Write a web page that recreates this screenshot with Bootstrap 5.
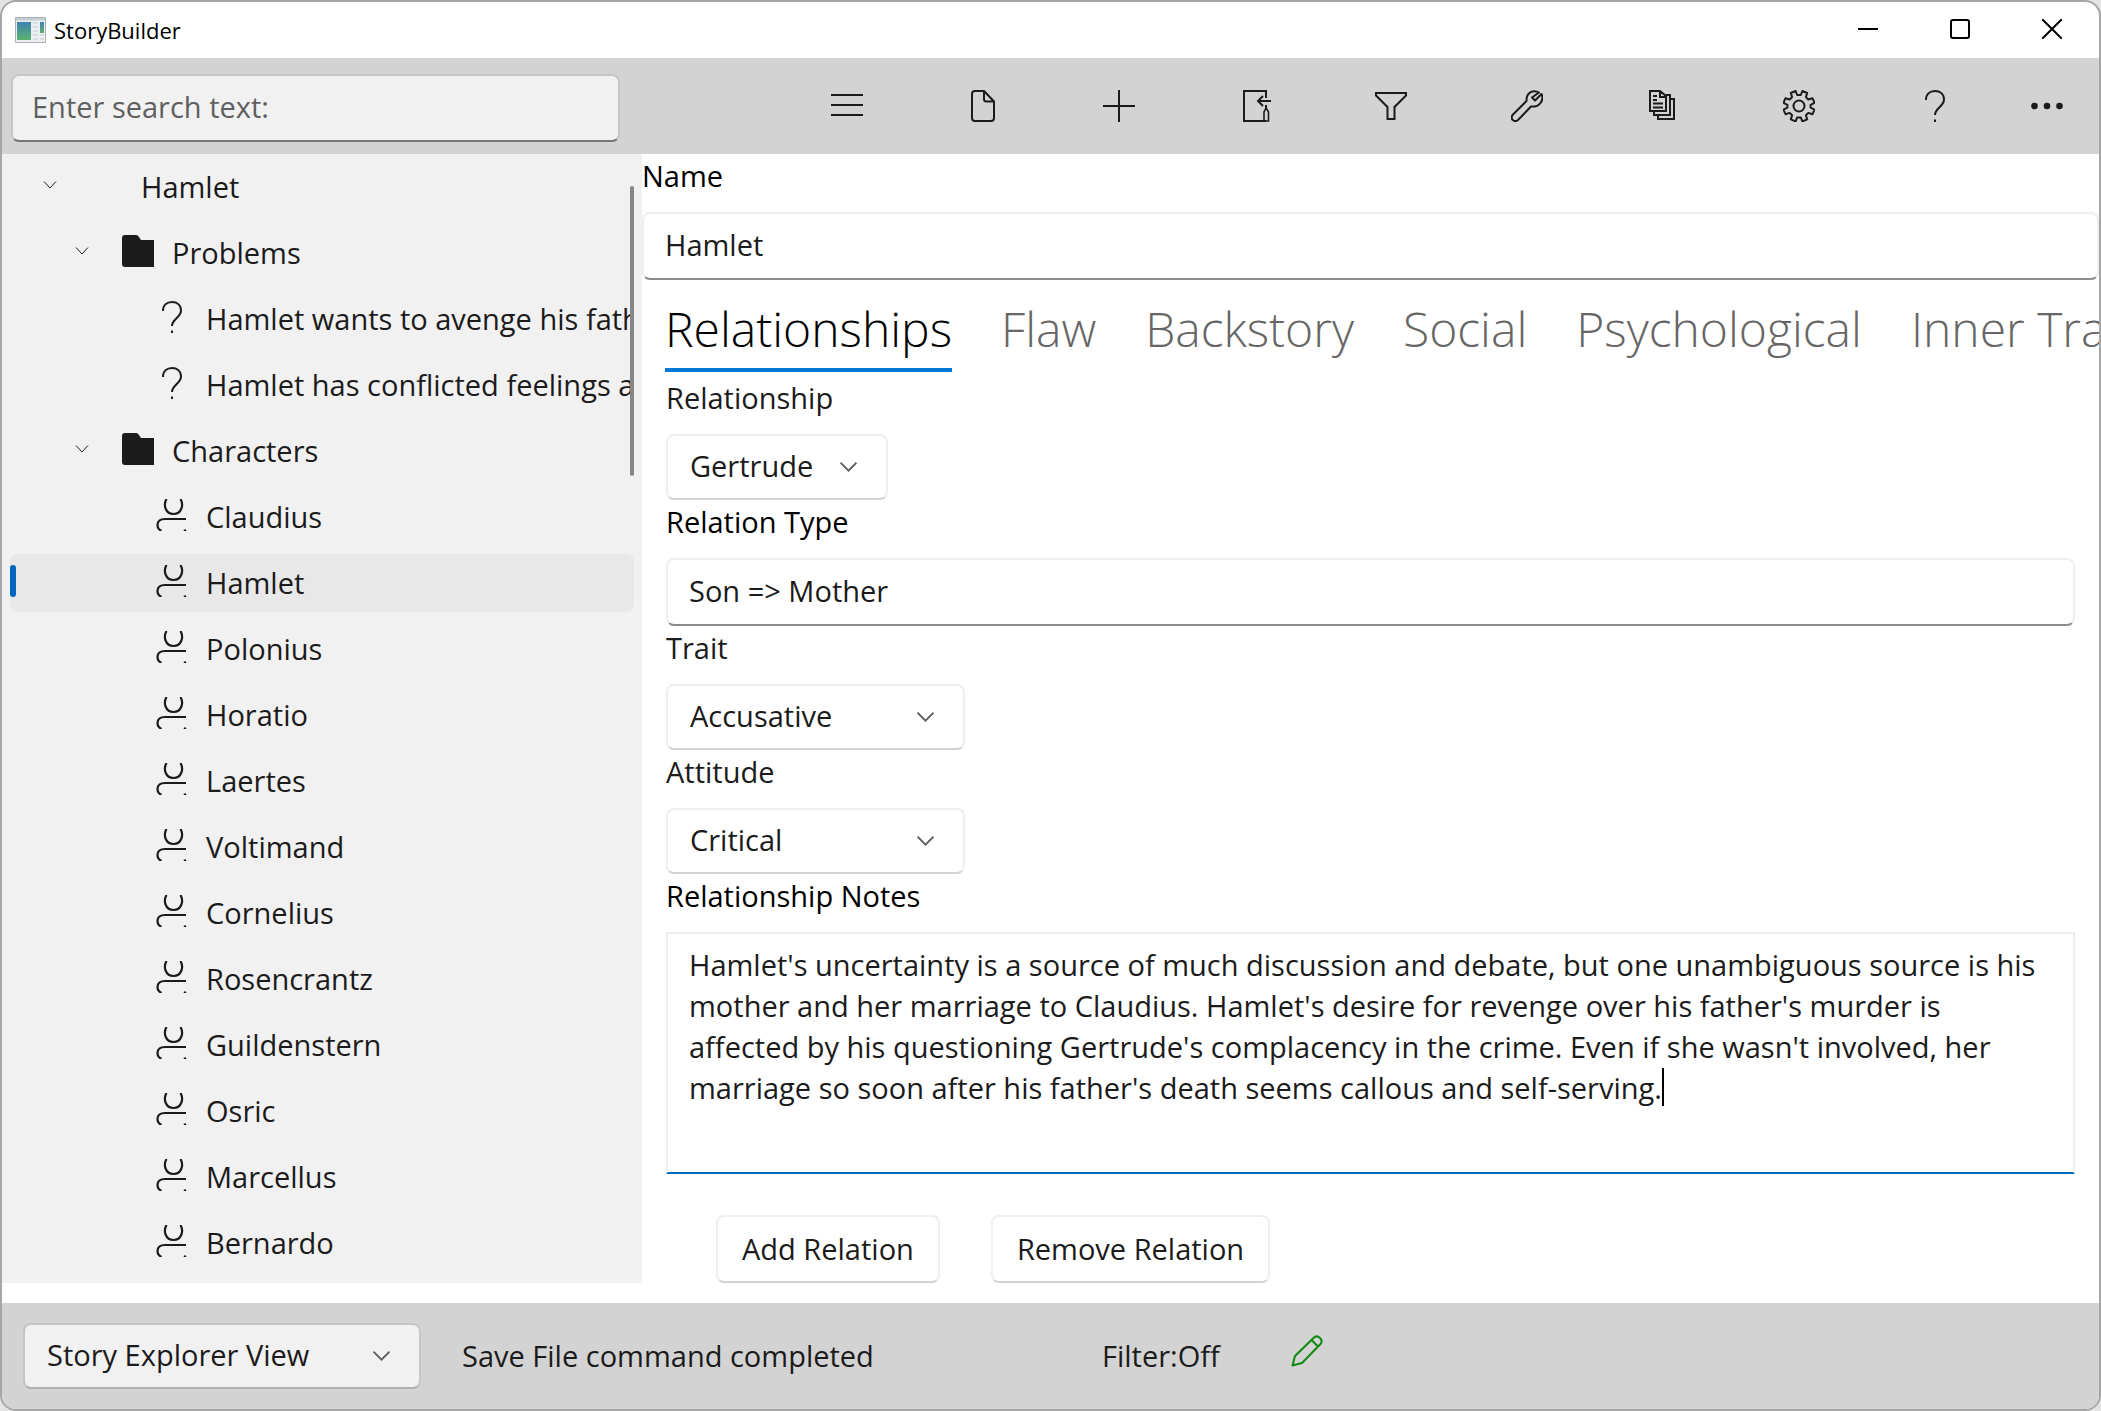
<!DOCTYPE html>
<html lang="en">
<head>
<meta charset="utf-8">
<meta name="viewport" content="width=device-width, initial-scale=1">
<title>StoryBuilder</title>
<link href="https://cdn.jsdelivr.net/npm/bootstrap@5.3.0/dist/css/bootstrap.min.css" rel="stylesheet">
<style>
  :root { --ink: #1b1b1b; --bar: #d3d3d3; --pane: #f1f1f1; --chev: url("data:image/svg+xml,%3Csvg xmlns='http://www.w3.org/2000/svg' viewBox='0 0 16 16'%3E%3Cpath d='M0.500 4.500 8 12l7.500-7.500' fill='none' stroke='%23606060' stroke-width='1.800'/%3E%3C/svg%3E"); }
  body { font-family: "Open Sans", "Noto Sans", sans-serif; font-size: 29px; line-height: 40px; color: var(--ink); background: #e4e4e4; }
  svg { display: block; fill: none; stroke: currentColor; stroke-width: 2; }
  .app-window { min-height: 100vh; border: 2px solid #a6a6a6; border-radius: 16px; background: #fff; overflow: hidden; }
  .title-strip { height: 56px; color: #000; font-size: 22px; padding-left: 13px; padding-right: 1px; }
  .caption-btn { width: 92px; height: 54px; margin-bottom: 2px; }
  .plain-btn { border: 0; padding: 0; background: none; color: inherit; display: flex; align-items: center; justify-content: center; }
  .tool-strip { height: 96px; background: var(--bar); padding: 0 8px 0 9px; }
  .tool-btn { width: 136px; height: 96px; }
  .more-btn { width: 88px; }
  .form-control, .form-select, .btn { font-size: 29px; line-height: 40px; color: var(--ink); }
  .form-control { height: 68px; padding: 10px 21px 14px; border: 2px solid #efefef; border-bottom-color: #8b8b8b; border-radius: 8px; }
  .form-select { height: 66px; width: 299px; padding: 10px 60px 12px 22px; border: 2px solid #efefef; border-bottom-color: #d3d3d3; border-radius: 8px; background-color: #fff; background-image: var(--chev); background-size: 17px 17px; background-position: right 29px top 22px; }
  .form-select.narrow { width: 222px; padding-right: 40px; }
  .form-select.view-pick { width: 398px; background-color: #f1f1f1; border-color: #c6c6c6; border-bottom-color: #b0b0b0; }
  .search-field { width: 609px; background: #f1f1f1; border-color: #c6c6c6; border-bottom-color: #767676; padding-left: 19px; margin-top: 4px; }
  .search-field::placeholder { color: #5f5f5f; }
  .explorer { flex: 0 0 640px; min-width: 0; background: var(--pane); padding: 0 8px; position: relative; }
  .tree-clip { overflow: hidden; }
  .tree-clip li { padding: 4px 0; }
  .tree-item { height: 58px; border-radius: 8px; white-space: nowrap; color: var(--ink); text-decoration: none; display: flex; align-items: center; }
  .tree-item.selected { background: #e8e8e8; position: relative; }
  .tree-item.selected::before { content: ""; position: absolute; left: 0; top: 11px; width: 6px; height: 32px; border-radius: 3px; background: #0067c0; }
  .lvl-0 { padding-left: 33px; } .lvl-0 .chev { margin-right: 84px; }
  .lvl-1 { padding-left: 65px; } .lvl-1 .chev { margin-right: 33px; }
  .lvl-2 { padding-left: 146px; }
  .chev { stroke-width: 1; margin-bottom: 4px; }
  .tree-icon { margin-right: 18px; margin-bottom: 4px; flex: none; }
  .scroll-thumb { position: absolute; right: 8px; top: 32px; width: 4px; height: 290px; border-radius: 2px; background: #868686; }
  .form-label { display: block; line-height: 44px; margin: 0 0 14px; }
  .dark-label { color: #000; }
  .tab-strip { height: 96px; gap: 49px; padding-left: 23px; overflow: hidden; }
  .tab-strip .nav-link { padding: 0; font-size: 48px; font-weight: 300; line-height: 98px; height: 92px; color: #666; border-bottom: 4px solid transparent; white-space: nowrap; }
  .tab-strip .nav-link.active { color: #000; border-bottom-color: #0078d7; }
  .detail { padding: 0 24px 0 24px; }
  .notes-field { height: 242px; line-height: 41px; border-radius: 0; border-bottom-color: #0067c0; resize: none; overflow: hidden; }
  .text-caret { position: absolute; left: 996px; top: 136px; width: 2px; height: 38px; background: #000; }
  .detail-actions { padding-left: 50px; gap: 51px; }
  .action-btn { height: 68px; padding: 0 24px; border: 2px solid #efefef; border-bottom-color: #d3d3d3; border-radius: 8px; background: #fff; }
  .status-strip { height: 106px; background: var(--bar); padding-left: 21px; margin-top: 20px; }
  .status-msg { width: 640px; margin-left: 41px; }
  .pencil { color: #0f8a0f; margin: 0 0 10px 71px; }
</style>
<script src="https://cdn.jsdelivr.net/npm/bootstrap@5.3.0/dist/js/bootstrap.bundle.min.js"></script>
</head>
<body>
<svg width="0" height="0" class="position-absolute" aria-hidden="true">
  <symbol id="i-chev" viewBox="0 0 14 10"><path d="M1 1.500 7 8l6-6.500"/></symbol>
  <symbol id="i-folder" viewBox="0 0 32 32"><path d="M3 0h11q2 0 3 2l2 3h13v27H3q-3 0-3-3V3q0-3 3-3z" fill="#1b1b1b" stroke="none"/></symbol>
  <symbol id="i-help" viewBox="0 0 32 32"><path d="M7 10C7 4 11 1 16 1s9 3 9 8.500c0 7-9 8.500-9 15.500"/><path d="M16 29.500v2.500"/></symbol>
  <symbol id="i-person" viewBox="0 0 32 32"><path d="M10.500 0C7 6 9.500 15 17.500 15S28 6 24.500 0" stroke-width="2.200"/><path d="M30 20H9q-7.500 0-7.500 6 0 4 4 6M28 32l2-1" stroke-width="2.200"/></symbol>
</svg>
<div class="app-window d-flex flex-column">
  <header class="title-strip d-flex align-items-center">
    <svg width="31" height="26" viewBox="0 0 31 26" stroke="none"><defs><linearGradient id="g" x2="0" y2="1"><stop stop-color="#3f81b4"/><stop offset="1" stop-color="#5bb36d"/></linearGradient></defs><path d="M.5.500h30v25H.5z" fill="#eceef0" stroke="#a9b2ba" stroke-width="1"/><path d="M1 1h29v2.500H1z" fill="#c3cdd6" stroke="none"/><path d="M2 5h14v18H2z" fill="url(#g)" stroke="none"/><path d="M25 5h4v11h-4z" fill="url(#g)" stroke="none"/><path d="M18 6h5M18 10h5M18 14h5M18 18h5M18 22h5M25 18h4M25 22h4" stroke="#c9cdd1" stroke-width="1"/></svg>
    <span class="ms-2 me-auto">StoryBuilder</span>
    <button class="plain-btn caption-btn" aria-label="Minimize"><svg width="20" height="20"><path d="M0 10h20"/></svg></button>
    <button class="plain-btn caption-btn" aria-label="Maximize"><svg width="20" height="20"><rect x="1" y="1" width="18" height="18" rx="2"/></svg></button>
    <button class="plain-btn caption-btn" aria-label="Close"><svg width="20" height="20"><path d="M0 0l20 20M20 0 0 20"/></svg></button>
  </header>

  <div class="tool-strip d-flex align-items-center">
    <input class="form-control search-field" type="search" placeholder="Enter search text:" aria-label="Search text">
    <nav class="d-flex ms-auto" aria-label="Commands">
      <button class="plain-btn tool-btn" aria-label="Menu"><svg width="32" height="32"><path d="M0 5h32M0 15h32M0 25h32"/></svg></button>
      <button class="plain-btn tool-btn" aria-label="File"><svg width="32" height="32"><path d="M7 1h10l10 10.500V28q0 3-3 3H8q-3 0-3-3V4q0-3 3-3M17 1v8q0 2.500 2.500 2.500H27"/></svg></button>
      <button class="plain-btn tool-btn" aria-label="Add"><svg width="32" height="32"><path d="M16 0v32M0 16h32"/></svg></button>
      <button class="plain-btn tool-btn" aria-label="Move"><svg width="32" height="32"><path d="M27 8V1H5v30h22M33 11H19M24 6l-5 5 5 5M27 15v4"/><path d="M27 18l-2 4v9h4.500v-9z" stroke-width="1.600"/></svg></button>
      <button class="plain-btn tool-btn" aria-label="Filter"><svg width="32" height="32"><path d="M1 3h30v2.500L19.500 17v12h-7V17L1 5.500z"/></svg></button>
      <button class="plain-btn tool-btn" aria-label="Tools"><svg width="32" height="32"><path d="M28 2.500C22-1 15 3 15.500 11L1.500 25c-2.500 4 2 8 5.500 5L20 16.500c8 1 13.500-6 10.500-12.500L24 10.500l-3-3z" stroke-linejoin="round"/></svg></button>
      <button class="plain-btn tool-btn" aria-label="Reports"><svg width="32" height="32"><path d="M3 1h10l6 5v15H3zM13 1v6h6M19 5h4v20H7v-4M23 9h4v20H11v-4M6 6h4M6 10h4M6 13.500h10M6 17.500h10"/></svg></button>
      <button class="plain-btn tool-btn" aria-label="Settings"><svg width="32" height="32" viewBox="0 0 32 32"><circle cx="16" cy="16" r="5.500"/><path stroke-linejoin="round" d="M12.600 1 14.200 5h3.600l1.600-4 4.800 2-1.300 4.100 2.400 2.400 4.200-1.300 2 4.600-3.900 2v2.800l3.900 2-2 4.600-4.200-1.300-2.400 2.400 1.300 4.100-4.800 2-1.600-4h-3.600l-1.600 4-4.800-2 1.300-4.100-2.400-2.400-4.200 1.300-2-4.600 3.900-2v-2.800l-3.900-2 2-4.600 4.200 1.300 2.400-2.400L7.800 3z"/></svg></button>
      <button class="plain-btn tool-btn" aria-label="Help"><svg width="32" height="32"><use href="#i-help"/></svg></button>
      <button class="plain-btn tool-btn more-btn" aria-label="More"><svg width="32" height="32"><g fill="currentColor" stroke="none"><circle cx="3.500" cy="16" r="3.300"/><circle cx="16" cy="16" r="3.300"/><circle cx="28.500" cy="16" r="3.300"/></g></svg></button>
    </nav>
  </div>

  <div class="d-flex flex-grow-1">
    <aside class="explorer">
      <ul class="tree-clip list-unstyled m-0">
        <li><a href="#" class="tree-item lvl-0"><svg class="chev" width="14" height="10"><use href="#i-chev"/></svg>Hamlet</a></li>
        <li><a href="#" class="tree-item lvl-1"><svg class="chev" width="14" height="10"><use href="#i-chev"/></svg><svg class="tree-icon" width="32" height="32"><use href="#i-folder"/></svg>Problems</a></li>
        <li><a href="#" class="tree-item lvl-2"><svg class="tree-icon" width="32" height="32"><use href="#i-help"/></svg>Hamlet wants to avenge his father</a></li>
        <li><a href="#" class="tree-item lvl-2"><svg class="tree-icon" width="32" height="32"><use href="#i-help"/></svg>Hamlet has conflicted feelings about</a></li>
        <li><a href="#" class="tree-item lvl-1"><svg class="chev" width="14" height="10"><use href="#i-chev"/></svg><svg class="tree-icon" width="32" height="32"><use href="#i-folder"/></svg>Characters</a></li>
        <li><a href="#" class="tree-item lvl-2"><svg class="tree-icon" width="32" height="32"><use href="#i-person"/></svg>Claudius</a></li>
        <li><a href="#" class="tree-item lvl-2 selected" aria-current="true"><svg class="tree-icon" width="32" height="32"><use href="#i-person"/></svg>Hamlet</a></li>
        <li><a href="#" class="tree-item lvl-2"><svg class="tree-icon" width="32" height="32"><use href="#i-person"/></svg>Polonius</a></li>
        <li><a href="#" class="tree-item lvl-2"><svg class="tree-icon" width="32" height="32"><use href="#i-person"/></svg>Horatio</a></li>
        <li><a href="#" class="tree-item lvl-2"><svg class="tree-icon" width="32" height="32"><use href="#i-person"/></svg>Laertes</a></li>
        <li><a href="#" class="tree-item lvl-2"><svg class="tree-icon" width="32" height="32"><use href="#i-person"/></svg>Voltimand</a></li>
        <li><a href="#" class="tree-item lvl-2"><svg class="tree-icon" width="32" height="32"><use href="#i-person"/></svg>Cornelius</a></li>
        <li><a href="#" class="tree-item lvl-2"><svg class="tree-icon" width="32" height="32"><use href="#i-person"/></svg>Rosencrantz</a></li>
        <li><a href="#" class="tree-item lvl-2"><svg class="tree-icon" width="32" height="32"><use href="#i-person"/></svg>Guildenstern</a></li>
        <li><a href="#" class="tree-item lvl-2"><svg class="tree-icon" width="32" height="32"><use href="#i-person"/></svg>Osric</a></li>
        <li><a href="#" class="tree-item lvl-2"><svg class="tree-icon" width="32" height="32"><use href="#i-person"/></svg>Marcellus</a></li>
        <li><a href="#" class="tree-item lvl-2"><svg class="tree-icon" width="32" height="32"><use href="#i-person"/></svg>Bernardo</a></li>
      </ul>
      <div class="scroll-thumb"></div>
    </aside>

    <main class="flex-grow-1 overflow-hidden d-flex flex-column">
      <label class="form-label dark-label" for="name">Name</label>
      <input class="form-control" id="name" value="Hamlet">
      <nav class="nav tab-strip flex-nowrap" aria-label="Character sections">
        <a class="nav-link active" aria-current="page" href="#">Relationships</a>
        <a class="nav-link" href="#">Flaw</a>
        <a class="nav-link" href="#">Backstory</a>
        <a class="nav-link" href="#">Social</a>
        <a class="nav-link" href="#">Psychological</a>
        <a class="nav-link" href="#">Inner Traits</a>
      </nav>
      <form class="detail d-flex flex-column flex-grow-1">
        <label class="form-label" for="relationship">Relationship</label>
        <select class="form-select narrow" id="relationship"><option>Gertrude</option></select>
        <label class="form-label dark-label" for="reltype">Relation Type</label>
        <input class="form-control" id="reltype" value="Son =&gt; Mother">
        <label class="form-label" for="trait">Trait</label>
        <select class="form-select" id="trait"><option>Accusative</option></select>
        <label class="form-label" for="attitude">Attitude</label>
        <select class="form-select" id="attitude"><option>Critical</option></select>
        <label class="form-label dark-label" for="notes">Relationship Notes</label>
        <div class="position-relative">
          <textarea class="form-control notes-field" id="notes">Hamlet's uncertainty is a source of much discussion and debate, but one unambiguous source is his mother and her marriage to Claudius. Hamlet's desire for revenge over his father's murder is affected by his questioning Gertrude's complacency in the crime. Even if she wasn't involved, her marriage so soon after his father's death seems callous and self-serving.</textarea>
          <span class="text-caret"></span>
        </div>
        <div class="detail-actions d-flex mt-auto">
          <button type="button" class="btn action-btn">Add Relation</button>
          <button type="button" class="btn action-btn">Remove Relation</button>
        </div>
      </form>
    </main>
  </div>

  <footer class="status-strip d-flex align-items-center">
    <select class="form-select view-pick" aria-label="View"><option>Story Explorer View</option></select>
    <span class="status-msg">Save File command completed</span>
    <span>Filter:Off</span>
    <svg class="pencil" width="32" height="32" role="img" aria-label="Edited"><path d="M1.500 30.500 4 21 23 2.500q3-2.500 6 .5t.5 6L11 28zM20.500 5l6.500 6.500" stroke-linejoin="round"/></svg>
  </footer>
</div>
</body>
</html>
